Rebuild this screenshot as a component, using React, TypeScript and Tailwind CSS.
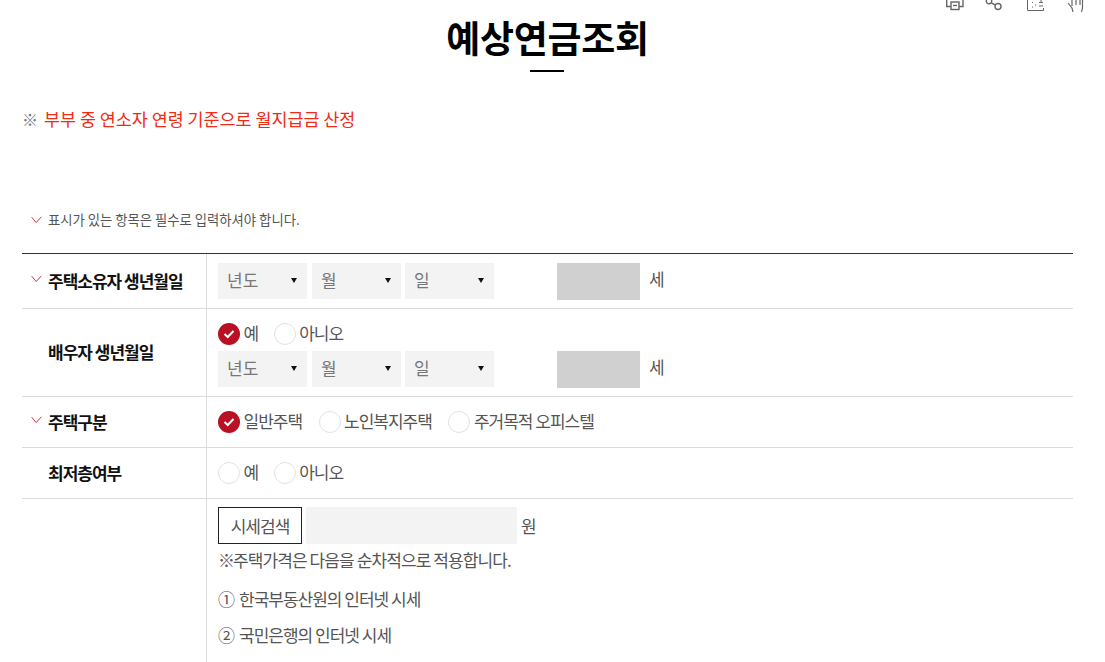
const FONT = "font-['Noto_Sans_CJK_KR','Noto_Sans',sans-serif]";

function Check() {
  return (
    <svg width="11" height="8" viewBox="0 0 11 8" fill="none">
      <path d="M0.700 1.200L5.200 6.600L10.300 0.800" stroke="#c8354a" strokeWidth="1" />
    </svg>
  );
}

function Radio({ label, on = false }: { label: string; on?: boolean }) {
  return (
    <div className="flex items-center h-[22px]">
      {on ? (
        <span className="w-[22px] h-[22px] rounded-full bg-[#b91024] flex items-center justify-center">
          <svg width="12" height="10" viewBox="0 0 12 10" fill="none">
            <path d="M1.500 5L4.700 8L10.500 2" stroke="#fff" strokeWidth="2" />
          </svg>
        </span>
      ) : (
        <span className="w-[22px] h-[22px] rounded-full border border-[#e2e2e2] bg-white" />
      )}
      <span className="ml-[3.500px] -mt-[2px] text-[17px] tracking-[-1px] text-[#555] leading-[22px]">{label}</span>
    </div>
  );
}

function Select({ label }: { label: string }) {
  return (
    <div className="w-[89px] h-9 bg-[#f3f3f3] flex items-center justify-between pl-[9px] pr-[10px]">
      <span className="text-[17px] text-[#777] -mt-[2px]">{label}</span>
      <svg width="6" height="5" viewBox="0 0 6 5" className="-mt-[2px]"><path d="M0 0H6L3 5Z" fill="#111" /></svg>
    </div>
  );
}

function DateRow() {
  return (
    <div className="flex items-start h-9">
      <Select label="년도" />
      <div className="w-[5px]" />
      <Select label="월" />
      <div className="w-[4px]" />
      <Select label="일" />
      <div className="w-[63px]" />
      <div className="w-[83px] h-[37px] bg-[#d0d0d0]" />
      <span className="ml-[9px] text-[17px] leading-[32px] text-[#555]">세</span>
    </div>
  );
}

function Row({ label, req = false, h, children, top }: { label?: string; req?: boolean; h: string; children: React.ReactNode; top?: string }) {
  return (
    <div className={`flex ${h} border-b border-[#dcdcdc]`}>
      <div className="w-[185px] shrink-0 border-r border-[#dcdcdc] flex items-center pl-[9px]">
        <span className="w-[17px] flex items-center -mt-[5px]">{req && <Check />}</span>
        {label && <span className="text-[17px] leading-[24px] -mt-[1px] font-bold tracking-[-1px] text-[#111]">{label}</span>}
      </div>
      <div className={`flex-1 pl-[11px] flex flex-col ${top ?? "justify-center"}`}>{children}</div>
    </div>
  );
}

export default function App() {
  return (
    <div className={`${FONT} relative h-[662px] overflow-hidden bg-white px-[22px] w-[1105px]`}>
      <div className="absolute right-[21px] top-0 flex">
        <svg width="20" height="12" viewBox="0 0 20 12" fill="none" stroke="#666" strokeWidth="1.400" className="mr-[20px]">
          <path d="M1.700 0v6.500h4M18 0v6.500h-4" />
          <rect x="6" y="2" width="8" height="7.500" />
          <path d="M8 5.500h4" />
        </svg>
        <svg width="18" height="12" viewBox="0 0 18 12" fill="none" stroke="#666" strokeWidth="1.400" className="mr-[23px]">
          <circle cx="4" cy="1" r="2.700" />
          <circle cx="13" cy="6.500" r="3" />
          <path d="M6.300 2.800l4.200 2.400" />
        </svg>
        <svg width="19" height="12" viewBox="0 0 19 12" fill="none" stroke="#666" strokeWidth="1" className="mr-[22px]">
          <path d="M1.500 0v10.500h16V8" />
          <path d="M6 2.500h1M6 7h1M9 5h1M13 2.500h4M15 0v2M13 6h4" />
        </svg>
        <svg width="17" height="12" viewBox="0 0 17 12" fill="none" stroke="#666" strokeWidth="1.200">
          <path d="M1 3l4 5 1 4M5 0v6M9 0v5M13 0v5M15.500 0v8l-1 4" />
        </svg>
      </div>

      <div className="flex flex-col items-center pr-[10px]">
        <h1 className="mt-[10px] text-[37px] leading-[54px] font-bold text-black tracking-[-0.3px] -mb-[1px]">예상연금조회</h1>
        <div className="mt-[7px] mr-[2px] w-[34px] h-[2px] bg-black" />
      </div>

      <p className="mt-[35px] flex items-center h-6 text-[17.400px]">
        <span className="text-[#777] w-[22px] text-[16px]">※</span>
        <span className="text-[#f02a14]">부부 중 연소자 연령 기준으로 월지급금 산정</span>
      </p>

      <div className="mt-[79px] flex items-center h-5 pl-[9px] text-[13.330px] text-[#555]">
        <span className="w-[17px] flex items-center"><Check /></span>
        <span>표시가 있는 항목은 필수로 입력하셔야 합니다.</span>
      </div>

      <div className="mt-[23px] w-[1051px] border-t border-[#333]">
        <Row label="주택소유자 생년월일" req h="h-[55px]" top="pt-[9px]"><DateRow /></Row>
        <Row label="배우자 생년월일" h="h-[88px]" top="pt-[14px]">
          <div className="flex gap-[15.500px] mb-[6px]"><Radio label="예" on /><Radio label="아니오" /></div>
          <DateRow />
        </Row>
        <Row label="주택구분" req h="h-[51px]">
          <div className="flex gap-[16.500px]"><Radio label="일반주택" on /><Radio label="노인복지주택" /><Radio label="주거목적 오피스텔" /></div>
        </Row>
        <Row label="최저층여부" h="h-[51px]">
          <div className="flex gap-[15.500px]"><Radio label="예" /><Radio label="아니오" /></div>
        </Row>
        <div className="flex h-[170px]">
          <div className="w-[185px] shrink-0 border-r border-[#dcdcdc]" />
          <div className="flex-1 pl-[11px] pt-[8px] text-[17px] tracking-[-1px] text-[#555]">
            <div className="flex items-center h-[37px]">
              <div className="w-[84px] h-[37px] border border-[#222] flex items-center justify-center">시세검색</div>
              <div className="ml-[4px] w-[211px] h-[37px] bg-[#f3f3f3]" />
              <span className="ml-[4px]">원</span>
            </div>
            <p className="mt-[4px] h-6 leading-6 flex tracking-[-0.900px]"><span className="w-[15px]">※</span>주택가격은 다음을 순차적으로 적용합니다.</p>
            <p className="mt-[15px] h-6 leading-6 flex"><span className="w-[21px]">①</span>한국부동산원의 인터넷 시세</p>
            <p className="mt-[12px] h-6 leading-6 flex"><span className="w-[21px]">②</span>국민은행의 인터넷 시세</p>
          </div>
        </div>
      </div>
    </div>
  );
}
